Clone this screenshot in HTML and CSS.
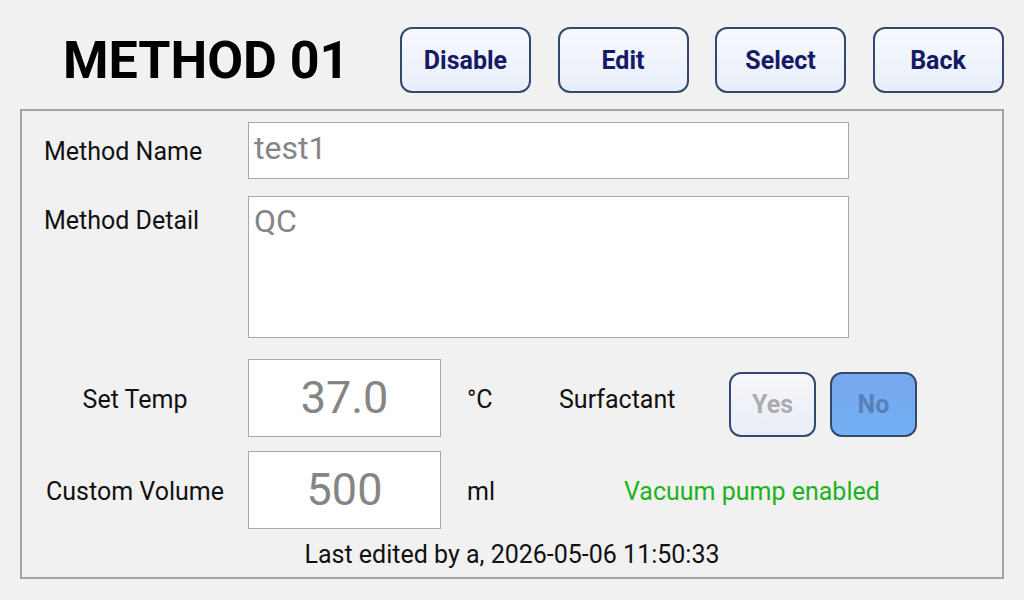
FILE: index.html
```html
<!DOCTYPE html>
<html lang="en">
<head>
  <meta charset="UTF-8" />
  <title>Method 01</title>
  <link rel="stylesheet" href="styles.css">
</head>
<body>

  <div class="header">
    <h1 class="title">METHOD 01</h1>
    <div class="actions">
      <button class="btn">Disable</button>
      <button class="btn">Edit</button>
      <button class="btn">Select</button>
      <button class="btn">Back</button>
    </div>
  </div>

  <div class="panel">
    <div class="row">
      <label class="label">Method Name</label>
      <div class="field field-name">test1</div>
    </div>

    <div class="row row-top">
      <label class="label label-top">Method Detail</label>
      <div class="field field-detail">QC</div>
    </div>

    <div class="row row-temp">
      <label class="label label-center">Set Temp</label>
      <div class="field field-num">37.0</div>
      <span class="unit">°C</span>
      <span class="surf">Surfactant</span>
      <div class="toggle">
        <button class="opt">Yes</button>
        <button class="opt opt-on">No</button>
      </div>
    </div>

    <div class="row row-vol">
      <label class="label label-center">Custom Volume</label>
      <div class="field field-num">500</div>
      <span class="unit">ml</span>
      <span class="status">Vacuum pump enabled</span>
    </div>

    <div class="edited">Last edited by a, 2026-05-06 11:50:33</div>
  </div>

</body>
</html>
```

FILE: styles.css
```css
body {
  margin: 0;
  width: 1024px;
  height: 600px;
  background: #f1f1f1;
  font-family: Roboto, "Liberation Sans", sans-serif;
  color: #111;
  overflow: hidden;
}

.header {
  display: flex;
  align-items: center;
  height: 98px;
  padding-top: 11px;
}

.title {
  margin: 0 0 0 63px;
  width: 337px;
  font-size: 52px;
  font-weight: 700;
  color: #000;
}

.actions {
  display: flex;
  gap: 26.5px;
}

.btn {
  width: 131px;
  height: 66px;
  border: 2.5px solid #34496f;
  border-radius: 12px;
  background: linear-gradient(#f7f9fd, #e8eefa);
  color: #141a66;
  font-family: Roboto, "Liberation Sans", sans-serif;
  font-size: 25px;
  font-weight: 700;
}

.panel {
  margin: 0 20px;
  height: 470px;
  border: 2px solid #a4a4a4;
  padding-top: 11px;
  box-sizing: border-box;
}

.row {
  display: flex;
  align-items: center;
}

.row-top {
  align-items: flex-start;
  margin-top: 17px;
}

.label {
  width: 204px;
  padding-left: 22px;
  padding-top: 2px;
  font-size: 25px;
}

.label-top {
  padding-top: 10px;
}

.label-center {
  padding-left: 0;
  width: 226px;
  text-align: center;
}

.field {
  background: #fff;
  border: 1px solid #a8a8a8;
  box-sizing: border-box;
  color: #858585;
}

.field-name {
  width: 601px;
  height: 57px;
  padding: 6px 5px;
  font-size: 32px;
}

.field-detail {
  width: 601px;
  height: 142px;
  padding: 5px 5px;
  font-size: 32px;
}

.field-num {
  width: 193px;
  height: 78px;
  line-height: 76px;
  text-align: center;
  font-size: 45px;
}

.row-temp {
  margin-top: 21px;
}

.row-vol {
  margin-top: 14px;
}

.unit {
  width: 92px;
  margin-left: 26px;
  padding-top: 2px;
  font-size: 25px;
}

.surf {
  width: 170px;
  padding-top: 2px;
  font-size: 25px;
}

.toggle {
  display: flex;
  gap: 14px;
  margin-top: 13px;
}

.opt {
  width: 87px;
  height: 65px;
  border: 2.5px solid #34496f;
  border-radius: 12px;
  background: linear-gradient(#f6f7fb, #e9edf6);
  color: #acacac;
  font-family: Roboto, "Liberation Sans", sans-serif;
  font-size: 25px;
  font-weight: 700;
}

.opt-on {
  background: linear-gradient(#78a7ec, #72b0f4);
  color: #5880b8;
}

.status {
  margin-left: 65px;
  padding-top: 2px;
  font-size: 25px;
  color: #1db31d;
}

.edited {
  margin-top: 11px;
  text-align: center;
  font-size: 25px;
}
```
